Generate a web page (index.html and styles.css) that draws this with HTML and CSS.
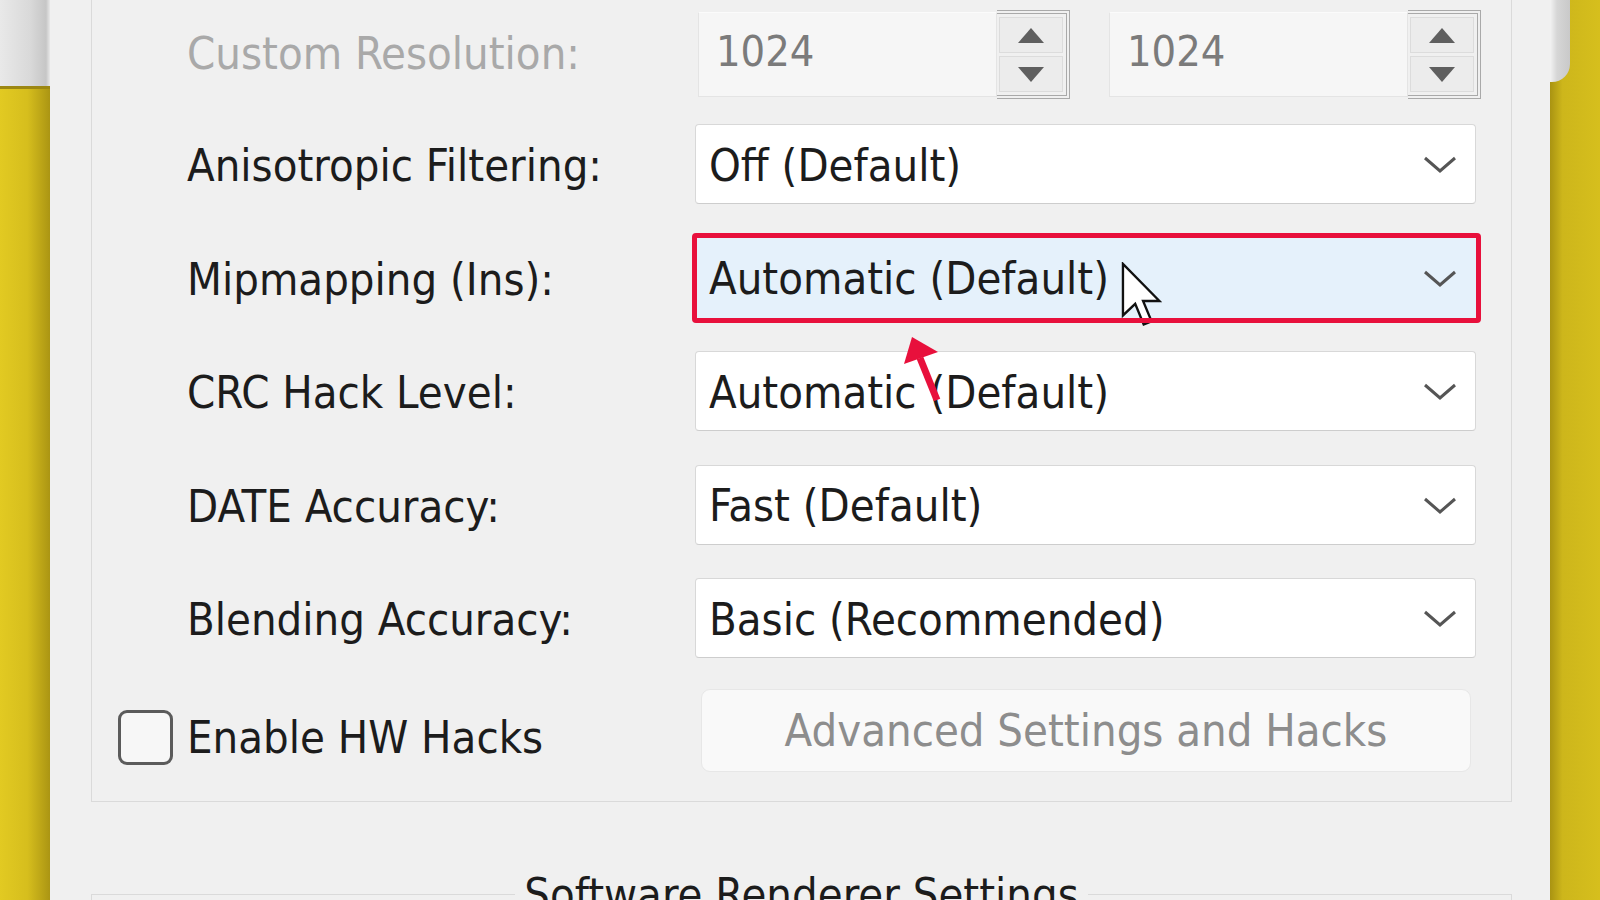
FILE: index.html
```html
<!DOCTYPE html>
<html lang="en">
<head>
<meta charset="utf-8">
<title>Renderer Settings</title>
<link rel="stylesheet" href="styles.css">
</head>
<body>
<div class="desk">
  <div class="side side-left"><div class="side-cap"></div></div>
  <main class="win">
    <section class="group">
      <div class="row row-spin">
        <span class="label disabled">Custom Resolution:</span>
        <div class="spins">
          <div class="spin">
            <span class="spin-val">1024</span>
            <div class="spin-btns"><span class="sb"><i class="tri up"></i></span><span class="sb"><i class="tri down"></i></span></div>
          </div>
          <div class="spin">
            <span class="spin-val">1024</span>
            <div class="spin-btns"><span class="sb"><i class="tri up"></i></span><span class="sb"><i class="tri down"></i></span></div>
          </div>
        </div>
      </div>
      <div class="row">
        <span class="label">Anisotropic Filtering:</span>
        <div class="combo"><span>Off (Default)</span><svg class="chev" viewBox="0 0 34 18"><polyline points="2,2 17,15 32,2"/></svg></div>
      </div>
      <div class="row">
        <span class="label">Mipmapping (Ins):</span>
        <div class="combo hl"><span>Automatic (Default)</span><svg class="chev" viewBox="0 0 34 18"><polyline points="2,2 17,15 32,2"/></svg></div>
      </div>
      <div class="row">
        <span class="label">CRC Hack Level:</span>
        <div class="combo"><span>Automatic (Default)</span><svg class="chev" viewBox="0 0 34 18"><polyline points="2,2 17,15 32,2"/></svg></div>
      </div>
      <div class="row">
        <span class="label">DATE Accuracy:</span>
        <div class="combo"><span>Fast (Default)</span><svg class="chev" viewBox="0 0 34 18"><polyline points="2,2 17,15 32,2"/></svg></div>
      </div>
      <div class="row">
        <span class="label">Blending Accuracy:</span>
        <div class="combo"><span>Basic (Recommended)</span><svg class="chev" viewBox="0 0 34 18"><polyline points="2,2 17,15 32,2"/></svg></div>
      </div>
      <div class="row row-last">
        <label class="check"><span class="box"></span><span>Enable HW Hacks</span></label>
        <div class="btn">Advanced Settings and Hacks</div>
      </div>
    </section>
    <fieldset class="group2"><legend>Software Renderer Settings</legend></fieldset>
  </main>
  <div class="side side-right"><div class="side-cap"></div></div>
</div>
<svg class="cursor" viewBox="0 0 13 21"><path d="M0.6,0.6 L0.6,17 L4.5,13.3 L7.2,19.9 L9.7,18.9 L7,12.4 L12.2,12.4 Z"/></svg>
<svg class="red-arrow" viewBox="0 0 60 70"><line x1="42" y1="66" x2="25" y2="24"/><polygon points="17,3 9,30 43,18"/></svg>
</body>
</html>
```
FILE: styles.css
```css
html, body {
  margin: 0;
  padding: 0;
}
body {
  width: 1600px;
  height: 900px;
  overflow: hidden;
  position: relative;
  font-family: "DejaVu Sans Condensed", "DejaVu Sans", sans-serif;
  font-size: 45px;
  color: #1c1c1c;
  background: #d4bc1c;
}
.desk {
  display: flex;
  height: 900px;
}
.side {
  width: 50px;
  flex: none;
}
.side-left {
  background: linear-gradient(90deg, #e2ca22 0%, #d6be1d 55%, #ab9513 100%);
}
.side-left .side-cap {
  height: 86px;
  background: linear-gradient(90deg, #e9e9e9 0%, #d9d9d9 60%, #c6c6c6 92%, #e8e8e8 100%);
  border-bottom: 3px solid #9c8712;
}
.side-right {
  background: linear-gradient(90deg, #a99312 0%, #cdb61b 25%, #d6bf1d 100%);
}
.side-right .side-cap {
  width: 20px;
  height: 82px;
  border-bottom-right-radius: 18px;
  background: linear-gradient(90deg, #f2f2f2 0%, #d6d6d6 35%, #c9c9c9 100%);
}
.win {
  flex: 1;
  min-width: 0;
  background: #f0f0f0;
  padding: 0 38px 0 41px;
  display: flex;
  flex-direction: column;
}
.group {
  margin-top: -20px;
  border: 1px solid #dadada;
  padding: 29px 35px 29px 26px;
  display: flex;
  flex-direction: column;
  min-width: 0;
}
.row {
  display: flex;
  align-items: center;
  height: 80px;
  margin-top: 33.6px;
  min-width: 0;
}
.row-spin {
  height: 89px;
  margin-top: 0;
}
.row-spin + .row {
  margin-top: 25px;
}
.label {
  box-sizing: border-box;
  width: 577px;
  flex: none;
  padding-left: 69px;
  padding-top: 3px;
  white-space: nowrap;
}
.label.disabled {
  color: #a9a9a9;
  padding-top: 0;
  padding-bottom: 3px;
}
.spins {
  display: flex;
  flex: none;
  gap: 39px;
  margin-left: 3px;
}
.spin {
  width: 372px;
  height: 89px;
  display: flex;
}
.spin-val {
  flex: 1;
  box-sizing: border-box;
  margin: 2px 0;
  background: #f6f6f6;
  border: 1px solid #e4e4e4;
  border-top-color: #fbfbfb;
  padding: 0 0 7px 17px;
  display: flex;
  align-items: center;
  font-size: 43px;
  color: #7b7b7b;
}
.spin-btns {
  width: 73px;
  box-sizing: border-box;
  border: 4px double #a9a9a9;
  border-left: none;
  display: flex;
  flex-direction: column;
  padding: 3px 3px 3px 2px;
  gap: 3px;
}
.sb {
  flex: 1;
  background: #ececec;
  border: 1px solid #dcdcdc;
  display: flex;
  align-items: center;
  justify-content: center;
}
.tri {
  width: 0;
  height: 0;
  border-left: 13px solid transparent;
  border-right: 13px solid transparent;
}
.tri.up {
  border-bottom: 15px solid #5f5f5f;
}
.tri.down {
  border-top: 15px solid #5f5f5f;
}
.combo {
  flex: 1;
  min-width: 0;
  height: 80px;
  box-sizing: border-box;
  background: #ffffff;
  border: 1px solid #d8d8d8;
  border-bottom-color: #cdcdcd;
  border-radius: 4px;
  display: flex;
  align-items: center;
  justify-content: space-between;
  padding: 2px 18px 0 13px;
  position: relative;
  white-space: nowrap;
}
.combo.hl {
  background: #e5f1fb;
  border-color: #e5f1fb;
}
.combo.hl::after {
  content: "";
  position: absolute;
  inset: -6px -6px -6px -4px;
  border: 5px solid #e8103c;
  border-radius: 4px;
  z-index: 3;
  pointer-events: none;
}
.chev {
  width: 34px;
  height: 18px;
  flex: none;
}
.chev polyline {
  fill: none;
  stroke: #555555;
  stroke-width: 3;
}
.row-last {
  height: 83px;
  margin-top: 30.6px;
  align-items: flex-start;
}
.check {
  box-sizing: border-box;
  width: 577px;
  flex: none;
  display: flex;
  align-items: center;
  gap: 14px;
  margin-top: 21px;
}
.box {
  width: 55px;
  height: 55px;
  box-sizing: border-box;
  border: 3px solid #5b5b5b;
  border-radius: 9px;
  background: #f7f7f7;
}
.btn {
  margin-left: 6px;
  width: 770px;
  height: 83px;
  box-sizing: border-box;
  background: #f9f9f9;
  border: 1px solid #e7e7e7;
  border-radius: 9px;
  color: #8d8d8d;
  display: flex;
  align-items: center;
  justify-content: center;
  white-space: nowrap;
}
.group2 {
  margin: 70px 0 0;
  padding: 0;
  border: 1px solid #dadada;
  height: 120px;
  min-width: 0;
}
.group2 legend {
  margin: 0 auto;
  padding: 0 9px;
  line-height: 45px;
  color: #1c1c1c;
}
.cursor {
  position: absolute;
  left: 1121px;
  top: 262px;
  width: 41px;
  height: 66px;
  z-index: 2;
}
.cursor path {
  fill: #ffffff;
  stroke: #111111;
  stroke-width: 0.75;
  stroke-linejoin: miter;
}
.red-arrow {
  position: absolute;
  left: 895px;
  top: 334px;
  width: 60px;
  height: 70px;
  z-index: 4;
}
.red-arrow line {
  stroke: #e8103c;
  stroke-width: 7;
}
.red-arrow polygon {
  fill: #e8103c;
}
```
